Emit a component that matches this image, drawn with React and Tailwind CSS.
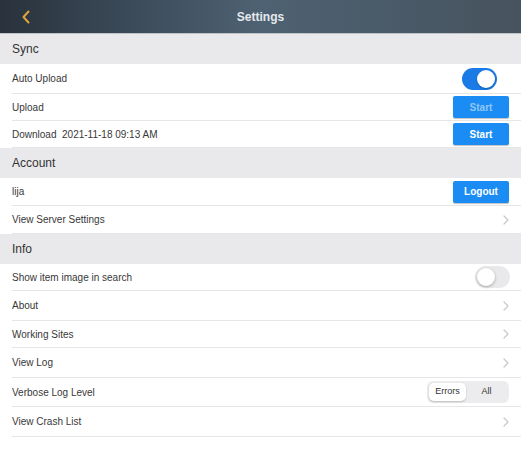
import React from "react";

const font = { fontFamily: '"Liberation Sans", Arial, sans-serif' };

function Chevron() {
  return (
    <svg width="6" height="10" viewBox="0 0 6 10" className="mr-[12px]">
      <path d="M1 1 L5 5 L1 9" fill="none" stroke="#c8c8cc" strokeWidth="1.2" strokeLinecap="round" strokeLinejoin="round" />
    </svg>
  );
}

function Section({ title }) {
  return (
    <div className="h-[30px] bg-[#e9e9eb] flex items-center pl-[12px] text-[12px] text-[#333]">
      {title}
    </div>
  );
}

function Row({ h, children, right }) {
  return (
    <div className="pl-[12px] bg-white">
      <div
        className="flex items-center justify-between border-b border-[#e6e6e8]"
        style={{ height: h }}
      >
        <span className="text-[10px] text-[#383838] whitespace-pre">{children}</span>
        {right}
      </div>
    </div>
  );
}

function Btn({ label, disabled }) {
  return (
    <div
      className={`mr-[12px] w-[56px] h-[22px] rounded-[2px] bg-[#1a8cf3] shadow-[0_1px_1px_rgba(0,0,0,0.25)] flex items-center justify-center text-[10px] font-bold ${
        disabled ? "text-[#8fc7f5]" : "text-white"
      }`}
    >
      {label}
    </div>
  );
}

function ToggleOn() {
  return (
    <div className="mr-[24px] w-[35px] h-[22px] rounded-full bg-[#1a7be6] flex items-center justify-end pr-[2px]">
      <div className="w-[18px] h-[18px] rounded-full bg-white shadow-[0_1px_2px_rgba(0,0,0,0.25)]" />
    </div>
  );
}

function ToggleOff() {
  return (
    <div className="mr-[11px] w-[35px] h-[22px] rounded-full bg-[#e9e9eb] flex items-center pl-[2px]">
      <div className="w-[18px] h-[18px] rounded-full bg-white shadow-[0_1px_3px_rgba(0,0,0,0.3)]" />
    </div>
  );
}

function Segmented() {
  return (
    <div className="mr-[12px] w-[82px] h-[22px] rounded-[6px] bg-[#ececee] flex items-center p-[2px] text-[9px] text-[#333]">
      <div className="w-[37px] h-[18px] rounded-[5px] bg-white shadow-[0_1px_2px_rgba(0,0,0,0.2)] flex items-center justify-center">
        Errors
      </div>
      <div className="flex-1 flex items-center justify-center">All</div>
    </div>
  );
}

export default function App() {
  return (
    <div className="w-[521px] h-[449px] bg-white overflow-hidden" style={font}>
      <div className="h-[34px] box-border bg-[linear-gradient(90deg,#29323c_0%,#3f4f5e_30%,#4e6273_50%,#4a5a68_75%,#47535e_100%)] flex items-center relative border-b border-[#bfc3c7]">
        <svg width="10" height="14" viewBox="0 0 10 14" className="ml-[21px]">
          <path d="M7.5 1.5 L2.5 7 L7.5 12.5" fill="none" stroke="#e3a33a" strokeWidth="2" strokeLinecap="round" strokeLinejoin="round" />
        </svg>
        <div className="absolute left-0 right-0 top-0 h-[33px] flex items-center justify-center text-[12px] font-bold text-[#e6e9ec] pointer-events-none">
          Settings
        </div>
      </div>
      <Section title="Sync" />
      <Row h={30} right={<ToggleOn />}>Auto Upload</Row>
      <Row h={27} right={<Btn label="Start" disabled />}>Upload</Row>
      <Row h={27} right={<Btn label="Start" />}>{"Download  2021-11-18 09:13 AM"}</Row>
      <Section title="Account" />
      <Row h={28} right={<Btn label="Logout" />}>lija</Row>
      <Row h={28} right={<Chevron />}>View Server Settings</Row>
      <Section title="Info" />
      <Row h={27} right={<ToggleOff />}>Show item image in search</Row>
      <Row h={30} right={<Chevron />}>About</Row>
      <Row h={27} right={<Chevron />}>Working Sites</Row>
      <Row h={30} right={<Chevron />}>View Log</Row>
      <Row h={29} right={<Segmented />}>Verbose Log Level</Row>
      <Row h={30} right={<Chevron />}>View Crash List</Row>
    </div>
  );
}
